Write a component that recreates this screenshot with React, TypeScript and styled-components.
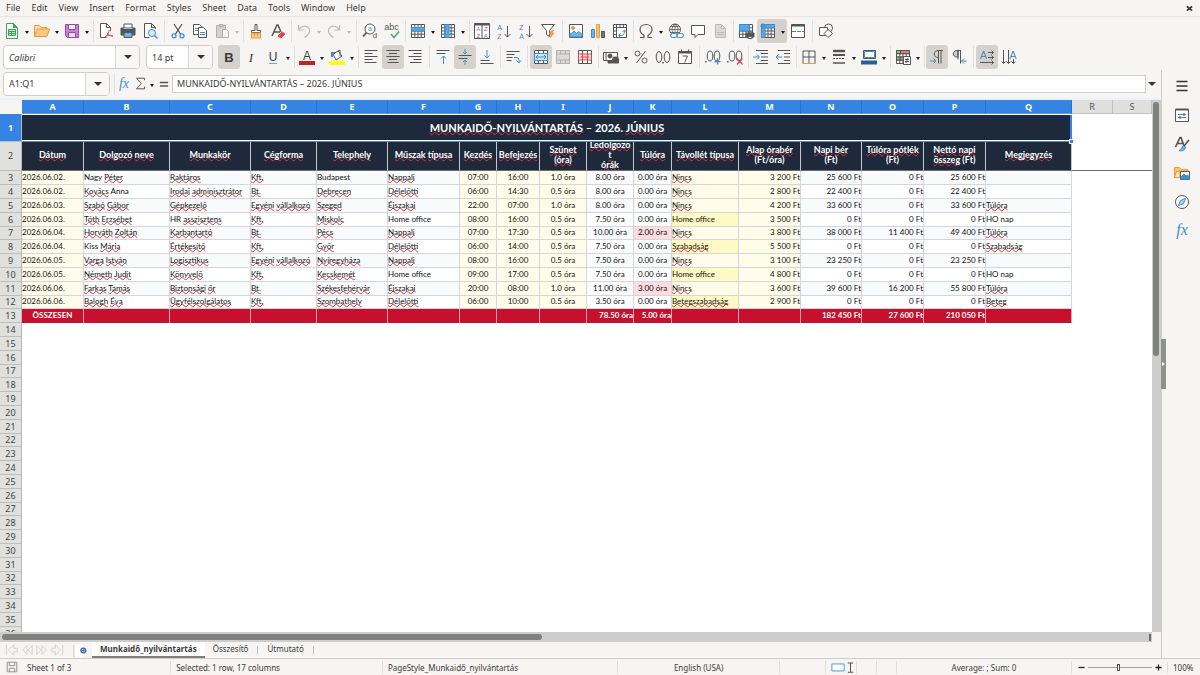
import React, { ReactNode } from 'react';
import styled, { createGlobalStyle, css } from 'styled-components';

const UI = '"Noto Sans", "Open Sans", sans-serif';
const CELL = 'Lato, "Liberation Sans", sans-serif';

const c = {
  chrome: '#f6f5f4',
  line: '#dad8d5',
  ink: '#3a3a38',
  blue: '#3584e4',
  navy: '#1e293b',
  red: '#c8102e',
  active: '#d5d1cd',
};

const GlobalStyle = createGlobalStyle`
  * { box-sizing: border-box; }
  html, body { margin: 0; }
  body { font-family: ${UI}; font-size: 9px; color: ${c.ink}; background: ${c.chrome}; overflow: hidden; }
  button, input { font: inherit; color: inherit; margin: 0; }
  svg { flex: none; overflow: visible; }
`;

const Shell = styled.div`
  display: flex;
  flex-direction: column;
  height: 100vh;
  background: ${c.chrome};
`;

const plainButton = css`
  border: 0;
  padding: 0;
  background: none;
`;

/* ---------- menu bar ---------- */
const MenuBar = styled.nav`
  display: flex;
  align-items: center;
  flex: none;
  height: 17px;
  padding: 0 7px 0 6px;
  gap: 11px;
  border-bottom: 1px solid #e6e4e2;
`;
const MenuItem = styled.button`
  ${plainButton}
  line-height: 16px;
`;
const CloseButton = styled.button`
  ${plainButton}
  margin-left: auto;
  display: flex;
`;

/* ---------- tool bars ---------- */
const Toolbar = styled.div`
  display: flex;
  align-items: center;
  flex: none;
  height: 27px;
  padding-left: 1px;
`;
const ToolButton = styled.button<{ $on?: boolean }>`
  ${plainButton}
  display: flex;
  align-items: center;
  justify-content: center;
  flex: none;
  width: 22px;
  height: 24px;
  border-radius: 3px;
  background: ${(p) => (p.$on ? c.active : 'transparent')};
`;
const ArrowButton = styled.button<{ $dim?: boolean }>`
  ${plainButton}
  display: flex;
  align-items: center;
  justify-content: center;
  flex: none;
  width: 8px;
  height: 24px;
  &::after {
    content: '';
    border: 2px solid transparent;
    border-top: 3px solid ${(p) => (p.$dim ? '#b9b7b4' : '#1c1c1c')};
    border-bottom: 0;
    margin-top: 3px;
  }
`;
const Split = styled.span<{ $on?: boolean }>`
  display: flex;
  border-radius: 3px;
  background: ${(p) => (p.$on ? c.active : 'transparent')};
`;
const Separator = styled.span<{ $tight?: boolean }>`
  flex: none;
  width: 1px;
  height: 22px;
  margin-left: ${(p) => (p.$tight ? 2 : 3)}px;
  margin-right: ${(p) => (p.$tight ? 1 : 2)}px;
  background: #e2dfdd;
`;

const Combo = styled.div<{ $width: number }>`
  display: flex;
  flex: none;
  width: ${(p) => p.$width}px;
  height: 24px;
  border: 1px solid #cfccc9;
  border-radius: 4px;
  background: #fff;
  overflow: hidden;
`;
const ComboInput = styled.input<{ $italic?: boolean }>`
  flex: 1;
  min-width: 0;
  border: 0;
  padding: 0 5px;
  outline: none;
  background: none;
  font-style: ${(p) => (p.$italic ? 'italic' : 'normal')};
`;
const ComboArrow = styled.button`
  ${plainButton}
  display: flex;
  align-items: center;
  justify-content: center;
  width: 24px;
  border-left: 1px solid #d8d5d2;
  background: #f8f7f6;
  &::after {
    content: '';
    border: 4px solid transparent;
    border-top-color: #2e3436;
    border-bottom: 0;
  }
`;
const FormatBar = styled(Toolbar)`
  height: 26px;
  padding-left: 3px;
`;
const ComboGroup = styled.div`
  display: flex;
  gap: 6px;
  margin-right: 5px;
`;

/* ---------- work area ---------- */
const Work = styled.main`
  display: flex;
  flex: 1;
  min-height: 0;
`;
const Document = styled.section`
  display: flex;
  flex-direction: column;
  flex: 1;
  min-width: 0;
`;
const FormulaBar = styled.div`
  display: flex;
  align-items: center;
  flex: none;
  height: 28px;
  padding: 0 0 1px 3px;
`;
const FormulaTools = styled.div`
  display: flex;
  align-items: center;
  padding-left: 2px;
`;
const SmallTool = styled.button`
  ${plainButton}
  display: flex;
  align-items: center;
  justify-content: center;
  width: 16px;
  height: 20px;
`;
const FormulaInput = styled.input`
  flex: 1;
  min-width: 0;
  height: 18px;
  padding: 0 4px;
  border: 1px solid #d0cdca;
  background: #fff;
  outline: none;
`;
const ExpandButton = styled.button`
  ${plainButton}
  display: flex;
  justify-content: center;
  width: 15px;
  padding-right: 3px;
  &::after {
    content: '';
    border: 4px solid transparent;
    border-top-color: #2e3436;
    border-bottom: 0;
  }
`;
const SheetArea = styled.div`
  display: flex;
  flex: 1;
  min-height: 0;
  border-top: 2px solid #eaf1f8;
`;
const GridView = styled.div`
  flex: 1;
  min-width: 0;
  overflow: hidden;
  background: #fff;
`;
const VTrack = styled.div`
  flex: none;
  width: 9px;
  padding: 2px 2px 0 1px;
  background: #cdcdcd;
`;
const VThumb = styled.div`
  height: 48%;
  border-radius: 3px;
  background: #80827f;
`;
const HTrack = styled.div`
  display: flex;
  align-items: center;
  flex: none;
  height: 10px;
  margin-right: 9px;
  padding: 0 1px 0 2px;
  background: #cdcdcd;
`;
const HThumb = styled.div`
  width: 47%;
  height: 6px;
  border-radius: 3px;
  background: #80827f;
`;
const HEnd = styled.div`
  width: 2px;
  height: 7px;
  margin-left: auto;
  background: #6b6d6a;
`;

/* ---------- spreadsheet table ---------- */
const Grid = styled.table`
  width: 100%;
  table-layout: fixed;
  border-collapse: separate;
  border-spacing: 0;
  font-family: ${CELL};
  font-size: 8px;
  line-height: 11px;
  color: #111;
  th, td { padding: 0; white-space: nowrap; }
`;
const GridRow = styled.tr<{ $height: number }>`
  height: ${(p) => p.$height}px;
`;
const Corner = styled.td`
  background: ${c.chrome};
`;
const ColHead = styled.th<{ $on?: boolean }>`
  height: 14px;
  font: ${(p) => (p.$on ? 'bold' : 'normal')} 9px/13px ${UI};
  color: ${(p) => (p.$on ? '#fff' : '#555')};
  background: ${(p) => (p.$on ? c.blue : '#dfdfde')};
  border-right: 1px solid ${(p) => (p.$on ? '#2c71c7' : '#c0c0bf')};
  border-bottom: 1px solid ${(p) => (p.$on ? '#5d9ae8' : '#c0c0bf')};
`;
const RowHead = styled.th<{ $on?: boolean }>`
  font: ${(p) => (p.$on ? 'bold' : 'normal')} 9px/12px ${UI};
  color: ${(p) => (p.$on ? '#fff' : '#444')};
  background: ${(p) => (p.$on ? c.blue : '#e0e0df')};
  border-right: 1px solid #b9b9b8;
  border-bottom: 1px solid #bdbdbc;
`;
const TitleCell = styled.td`
  && { padding-bottom: 3px; }
  position: relative;
  background: ${c.navy};
  color: #fff;
  font-size: 11px;
  font-weight: bold;
  text-align: center;
  border-top: 1px solid #fff;
  box-shadow: inset -2px 0 ${c.blue}, inset 0 -1px #4a90d9, inset 0 -2px #fff;
`;
const FillHandle = styled.span`
  position: absolute;
  right: -2px;
  bottom: -2px;
  width: 5px;
  height: 5px;
  background: ${c.blue};
  border: 1px solid #fff;
`;
const Frozen = styled.td`
  border-bottom: 1px solid #6b6b6b;
`;
const HeadCell = styled(Frozen)`
  background: ${c.navy};
  color: #fff;
  font-size: 9px;
  font-weight: bold;
  line-height: 10px;
  text-align: center;
  border-right: 1px solid #c3c9d0;
`;
const HeadText = styled.div`
  display: flex;
  flex-direction: column;
  justify-content: center;
  height: 28px;
  padding-bottom: 2px;
  overflow: hidden;
`;
type Align = 'left' | 'center' | 'right';
const Cell = styled.td<{ $align: Align; $bg: string }>`
  && { padding-bottom: 1px; }
  text-align: ${(p) => p.$align};
  background: ${(p) => p.$bg};
  border-right: 1px solid #d3d7dc;
  border-bottom: 1px solid #d3d7dc;
`;
const TotalCell = styled.td<{ $align: Align }>`
  && { padding-bottom: 2px; }
  text-align: ${(p) => p.$align};
  font-weight: bold;
  color: #fff;
  background: ${c.red};
  border-right: 1px solid #e0a3ad;
`;
const Misspelt = styled.span`
  text-decoration: underline wavy #e0363c 1px;
  text-decoration-skip-ink: none;
  text-underline-offset: -1px;
`;

/* ---------- tabs and status ---------- */
const TabBar = styled.div`
  display: flex;
  align-items: center;
  flex: none;
  height: 16px;
  padding-left: 5px;
  font-size: 8px;
`;
const TabNav = styled.button`
  ${plainButton}
  display: flex;
  width: 15px;
`;
const AddTab = styled.button`
  ${plainButton}
  display: flex;
  margin: 0 4px 0 8px;
`;
const Tab = styled.button<{ $on?: boolean }>`
  ${plainButton}
  align-self: stretch;
  padding: 0 8px;
  line-height: 14px;
  font-weight: ${(p) => (p.$on ? 'bold' : 'normal')};
  background: ${(p) => (p.$on ? '#fff' : 'none')};
  border-bottom: 2px solid ${(p) => (p.$on ? '#7d7f7c' : 'transparent')};
`;
const TabRule = styled.span`
  width: 1px;
  height: 8px;
  margin: 0 1px;
  background: #bdbbb8;
`;
const StatusBar = styled.footer`
  display: flex;
  align-items: center;
  flex: none;
  height: 17px;
  border-top: 1px solid #cfcdca;
  font-size: 8px;
`;
const Field = styled.div<{ $grow?: number; $width?: number; $center?: boolean }>`
  display: flex;
  align-items: center;
  justify-content: ${(p) => (p.$center ? 'center' : 'flex-start')};
  flex: ${(p) => (p.$grow ? `${p.$grow} 1 0` : 'none')};
  width: ${(p) => (p.$width ? `${p.$width}px` : 'auto')};
  min-width: 0;
  height: 13px;
  padding: 0 5px;
  gap: 8px;
  white-space: nowrap;
  border-right: 1px solid #e0dedc;
`;
const IconField = styled(Field)`
  padding: 0 0 0 5px;
  gap: 0;
`;
const ZoomField = styled.div`
  display: flex;
  align-items: center;
  flex: none;
  gap: 3px;
  width: 95px;
  padding: 0 5px 0 6px;
`;
const ZoomButton = styled.button`
  ${plainButton}
  display: flex;
`;
const ZoomSlider = styled.input`
  appearance: none;
  flex: 1;
  min-width: 0;
  height: 9px;
  background: linear-gradient(#a5a3a0, #a5a3a0) center / 100% 1px no-repeat;
  &::-webkit-slider-thumb {
    appearance: none;
    width: 3px;
    height: 7px;
    border: 1px solid #555;
    background: #f6f5f4;
  }
`;
const Percent = styled.span`
  flex: none;
  width: 33px;
  padding-left: 5px;
  border-left: 1px solid #e0dedc;
`;

/* ---------- side bar ---------- */
const Sidebar = styled.aside`
  position: relative;
  display: flex;
  flex-direction: column;
  align-items: center;
  flex: none;
  width: 39px;
  gap: 9px;
  padding: 6px 0 0 2px;
  border-left: 1px solid #cfcdca;
`;
const SideButton = styled.button`
  ${plainButton}
  display: flex;
  align-items: center;
  justify-content: center;
  width: 20px;
  height: 20px;
`;
const Splitter = styled.button`
  ${plainButton}
  position: absolute;
  left: -1px;
  top: 269px;
  width: 5px;
  height: 50px;
  background: #8f918e;
  &::after {
    content: '';
    display: block;
    margin-left: 1px;
    width: 0;
    border: 2px solid transparent;
    border-left: 3px solid #fff;
    border-right: 0;
  }
`;

/* ---------- icons ---------- */
const K = '#555';
const B = '#3a8fd0';
const O = '#ed9a3c';
const R = '#e2444a';
const P = '#a84fb8';

const Svg = ({ children, size = 16 }: { children: ReactNode; size?: number }) => (
  <svg width={size} height={size} viewBox="0 0 16 16" fill="none" stroke={K} aria-hidden="true">
    {children}
  </svg>
);
const gridLines = 'M1.5 1.5h13v13h-13zM1.5 4.8h13M1.5 8h13M1.5 11.2h13M4.8 1.5v13M8 1.5v13M11.2 1.5v13';
const glyph = { stroke: 'none', textAnchor: 'middle' as const };
const letter = { ...glyph, fontFamily: '"Liberation Sans", sans-serif' };

const icons: Record<string, ReactNode> = {
  new: (<><path d="M2.5 .5h7l4 4v11h-11z" fill="#fff" stroke="#3aa557" /><path d="M9.5.5v4h4z" fill="#3aa557" stroke="#3aa557" /><path d="M4.5 6.5h7v6h-7z" fill="#bfe5c8" stroke="#3aa557" /><path d="M4.5 8.5h7M4.5 10.5h7M7.5 8.5v4" stroke="#3aa557" /></>),
  open: (<><path d="M.5 13.5v-11h5l1.5 2h6v2" fill="#fbe3bb" stroke="#e39b3b" /><path d="M.5 13.5l2.5-7.5h12.5l-2.5 7.5z" fill="#fbc981" stroke="#e39b3b" /></>),
  save: (<><path d="M1.5 1.5h13v13h-11l-2-2z" fill="#c87fd4" stroke="#9c4bab" /><path d="M4.5 1.5h7v5h-7z" fill="#fff" stroke="#9c4bab" /><path d="M4.5 14.5v-5h7v5z" fill="#f1d9f5" stroke="#9c4bab" /></>),
  pdf: (<><path d="M12.5 8V4.5l-4-4h-6v14h6" fill="#fff" /><path d="M8.5.5v4h4" /><path d="M7 14c3-2 4-4 4-7M9 10c1 2 3 3 6 3M7 14c2-2 5-2 8-1" stroke={R} /></>),
  print: (<><path d="M4 5V1h8v4" fill="#fff" /><path d="M1 5h14v7H1z" fill="#555" /><path d="M3.5 5.5h9" stroke="#9bd" /><path d="M4 9.5h8v5H4z" fill="#6eb4e6" stroke={K} /></>),
  preview: (<><path d="M13.5 6V4.5l-4-4h-7v14h5" fill="#fff" /><path d="M9.5.5v4h4" /><circle cx="10" cy="10" r="3.5" fill="#d9edfa" stroke={B} /><path d="M12.5 12.5l3 3" stroke={B} strokeWidth="1.5" /></>),
  cut: (<><path d="M4 1l6.5 10M12 1L5.5 11" strokeWidth="1.3" /><circle cx="4" cy="12.8" r="2" stroke={B} strokeWidth="1.3" /><circle cx="12" cy="12.8" r="2" stroke={B} strokeWidth="1.3" /></>),
  copy: (<><path d="M1.5 1.5h6l2.5 2.5v7.500h-8.500z" fill="#fff" /><path d="M6.5 4.5h5l3 3v7h-8z" fill="#fff" /><path d="M3 5.5h3M3 7.5h3M8 9.5h5M8 11.5h5" stroke={B} /></>),
  paste: (<g stroke="#b3b1ae"><path d="M2.5 2.5h9v12h-9z" fill="#d3d1cf" /><path d="M5 1.5h4v2H5z" fill="#c3c1bf" /><path d="M8.5 6.5h4l2 2v6h-6z" fill="#f3f2f1" /></g>),
  clone: (<><path d="M7 1.5h2v6h3.5v2h-9v-2H7z" fill="#fff" /><path d="M3.5 10h9v5h-9z" fill="#f9c98a" stroke={O} /><path d="M6.5 10v3M9.5 10v3" stroke={O} /></>),
  clear: (<><path d="M2 13L7 2h1l3 7M4 9h6" strokeWidth="1.5" /><path d="M8 13l4-4 3 2-4 4z" fill={R} stroke={R} /></>),
  undo: (<path d="M2.5 2v5h5M2.500 7C5 2.500 11 2 13 5.500c1.500 3-.5 6.500-4.500 9" stroke="#bdbbb8" strokeWidth="1.2" />),
  redo: (<path d="M13.500 2v5h-5M13.500 7C11 2.500 5 2 3 5.500c-1.500 3 .5 6.500 4.500 9" stroke="#bdbbb8" strokeWidth="1.2" />),
  find: (<><circle cx="8" cy="6" r="5" fill="#fff" /><path d="M4.5 9.500L1 13.500" strokeWidth="1.8" /><text x="8" y="8" fontSize="7" fill={B} {...letter}>a</text><text x="13" y="15" fontSize="8" fill={K} {...letter}>d</text></>),
  spell: (<><text x="7.5" y="7" fontSize="9" fill={K} {...letter}>abc</text><path d="M7 11l3 3.500 5-6" stroke="#35b26b" strokeWidth="1.5" /></>),
  row: (<><path d={gridLines} fill="#fff" /><path d="M1.5 4.5h13v3.500h-13z" fill="#5aa9e6" stroke={B} /></>),
  col: (<><path d={gridLines} fill="#fff" /><path d="M5 1.5h4v13H5z" fill="#5aa9e6" stroke={B} /></>),
  sort: (<><path d="M.5.5h15v15H.5zM8 2v14" fill="#fff" /><path d="M.5 1.5h15" strokeWidth="2" /><text x="4.3" y="8" fontSize="6" fill={B} {...letter}>A</text><text x="4.3" y="15" fontSize="6" fill={P} {...letter}>Z</text><text x="11.8" y="8" fontSize="6" fill={P} {...letter}>Z</text><text x="11.8" y="15" fontSize="6" fill={B} {...letter}>A</text></>),
  asc: (<><text x="3.500" y="6.5" fontSize="7" fill={B} {...letter}>A</text><text x="3.500" y="15.500" fontSize="7" fill={P} {...letter}>Z</text><path d="M11.500 3v11M8.500 11l3 3 3-3" /></>),
  desc: (<><text x="3.500" y="6.5" fontSize="7" fill={P} {...letter}>Z</text><text x="3.500" y="15.500" fontSize="7" fill={B} {...letter}>A</text><path d="M11.500 3v11M8.500 11l3 3 3-3" /></>),
  filter: (<><path d="M1.5 1.5h13l-5 6v6l-3-2v-4z" fill="#fff" /><path d="M12 7l-3 4h2l-1 4 4.500-5h-2.500l2-3z" fill={O} stroke={O} strokeWidth=".5" /></>),
  image: (<><path d="M1.5 1.5h13v13h-13z" fill="#fff" /><path d="M2 14v-2.500L6 8l2.500 2.500L11 8.500l3 3V14z" fill="#6eb4e6" stroke={B} /><circle cx="5" cy="5" r="1.5" fill={O} stroke={O} /></>),
  chart: (<><path d="M1.5 6.5h3v8h-3z" fill="#6eb4e6" stroke={B} /><path d="M6.5 1.5h3v13h-3z" fill="#fbc36e" stroke={O} /><path d="M11.5 8.5h3v6h-3z" fill="#777" /></>),
  pivot: (<><path d="M1.5 1.5h13v13h-13z" fill="#fff" /><path d="M4.500 1.500v13M1.500 4.500h13M8 1.500v3M11.500 1.500v3M1.500 8h3M1.500 11.500h3" /><path d="M7 12.500h2.500c2 0 3-1.500 3-5M8.500 10.500l-2 2 2 2M10.500 9l2-2 2 2" stroke={B} /></>),
  omega: (<path d="M2 14.500h4v-2C3 10.500 2 9 2 6.500 2 3.500 4.500 1.500 8 1.500s6 2 6 5c0 2.500-1 4-4 6v2h4" strokeWidth="1.2" />),
  link: (<><circle cx="7" cy="6.5" r="5.500" fill="#fff" /><path d="M1.5 6.5h11M7 1v11M2.500 3.500h9M2.500 9.500h9M7 1C3 4 3 9 7 12M7 1c4 3 4 8 0 11" strokeWidth=".8" /><rect x="2.5" y="10.5" width="7" height="4" rx="2" fill="#f6f5f4" stroke={B} /><rect x="8.5" y="10.5" width="7" height="4" rx="2" stroke={B} /></>),
  comment: (<path d="M1.5 2.5h13v9H8l-3 3v-3H1.5z" fill="#fff" />),
  header: (<><path d="M3.5 1.5h6l4 4v9h-10z" fill="#dcdad8" stroke="#bcbab7" /><path d="M5 9.500h7M5 11.500h7M9.500 1.500v4h4" stroke="#bcbab7" /></>),
  printArea: (<><path d={gridLines} fill="#fff" /><path d="M1.5 1.5h9.700v6.500H1.5z" fill="#5aa9e6" stroke={B} /><path d="M8 10h8v4H8z" fill="#555" /><path d="M10 9h4M10 13.500h4v2h-4z" fill="#fff" /></>),
  freeze: (<><path d={gridLines} fill="#fff" /><path d="M1.5 1.5h13v3.300H5v9.700H1.500z" fill="#5aa9e6" stroke={B} /><path d="M3 0v6M0 3h6" stroke={B} /></>),
  splitWin: (<><path d="M1.5 1.5h13v13h-13z" fill="#fff" /><path d="M1.5 2.5h13" strokeWidth="2" /><path d="M2 8.500h12" stroke={B} strokeDasharray="4 1" /></>),
  shapes: (<><circle cx="10.5" cy="5" r="4" fill="#fff" /><path d="M1.5 4.500h8v8h-8z" fill="#fff" /><path d="M10 6.500l4.500 4-4.500 4-4-4z" fill="#fff" /></>),
  bold: (<text x="8" y="13" fontSize="13" fontWeight="bold" fill="#3a3a3a" {...letter}>B</text>),
  italic: (<text x="8" y="13" fontSize="13" fontStyle="italic" fill="#3a3a3a" fontFamily="Liberation Serif, serif" {...glyph}>I</text>),
  underline: (<><text x="8" y="12" fontSize="12" fill="#3a3a3a" {...letter}>U</text><path d="M4 14.500h8" stroke="#5aa9e6" /></>),
  fontColor: (<><text x="8" y="10.5" fontSize="12" fill="#3a3a3a" {...letter}>A</text><path d="M0 14h16" stroke="#c9211e" strokeWidth="4" /></>),
  fill: (<><path d="M4 5l5-3 4 5-6 4z" fill="#fff" /><path d="M9 2l2-1v6" /><path d="M3 8V4h3" stroke={B} strokeWidth="2" /><path d="M0 14h16" stroke="#ff0" strokeWidth="4" /></>),
  left: (<path d="M1.5 1.5h13M1.5 4.500h8M1.500 7.500h13M1.500 10.500h8M1.500 13.500h12" />),
  center: (<path d="M1.5 1.5h13M4 4.500h8M1.500 7.500h13M4 10.500h8M2.500 13.500h11" />),
  right: (<path d="M1.5 1.5h13M6.500 4.500h8M1.500 7.500h13M6.500 10.500h8M3 13.500h11.500" />),
  top: (<><path d="M1.5 1.5h13M1.5 4.500h9" /><path d="M8.500 15V7M6 9.500L8.500 7 11 9.500" stroke={B} /></>),
  middle: (<><path d="M1.5 6.5h13M1.5 9.500h9" /><path d="M8 0v5M6 3l2 2 2-2M8 16v-5M6 13l2-2 2 2" stroke={B} /></>),
  bottom: (<><path d="M1.5 14.500h13M1.500 11.500h9" /><path d="M8 1v8M5.500 6.500L8 9l2.500-2.500" stroke={B} /></>),
  wrap: (<><path d="M1.5 2.5h13M1.5 5.500h8M1.500 8.500h6M1.500 11.500h5" /><path d="M9 8.500h3c2 .5 2 2 2 5M11.500 11.500l2.500 2.500 2-2.500" stroke={B} /></>),
  merge: (<><path d="M1.5 1.5h13v13h-13zM5.500 1.500v3M10.500 1.500v3M5.500 11.500v3M10.500 11.500v3" fill="#fff" /><path d="M1.5 4.500h13v7h-13z" fill="#cfe6f7" stroke={B} /><path d="M3 8h10M5 6L3 8l2 2M11 6l2 2-2 2" stroke={B} /></>),
  mergeOff: (<path d="M1.5 1.5h13v13h-13zM1.5 5h13M1.500 11h13M5.500 1.500V5M10.500 1.500V5M5.500 11v3.500M10.500 11v3.500" fill="#dcdad8" stroke="#b5b3b0" />),
  unmerge: (<><path d="M1.5 1.5h13v13h-13zM5.500 1.500v13M10.500 1.500v13" fill="#fff" /><path d="M1.500 5h13v6h-13zM5.500 5v6M10.500 5v6M3.500 8h9" fill="#fbdcdc" stroke={R} /></>),
  currency: (<><path d="M.5 3.500h14v8H.5z" fill="#fff" /><circle cx="7" cy="7" r="2" fill="#555" /><path d="M3 3.500v8" /><ellipse cx="12.500" cy="9" rx="3" ry="1" fill="#555" /><path d="M9.500 10h6v4h-6zM5 12h4v2H5z" fill="#555" /></>),
  percent: (<><circle cx="4.5" cy="4.5" r="2.5" /><circle cx="11.5" cy="11.5" r="2.5" /><path d="M12.5 2l-9 12" /></>),
  number: (<><ellipse cx="4" cy="8" rx="2.8" ry="5.5" /><path d="M8 13v1.500" strokeWidth="1.5" /><ellipse cx="12" cy="8" rx="2.8" ry="5.5" /></>),
  date: (<><path d="M1.5 2.5h13v12h-13z" fill="#fff" /><path d="M1.5 3.500h13" strokeWidth="2" /><path d="M4.500.5v3M11.500.5v3M5.500 7h5l-3 6.500" /></>),
  addDec: (<><path d="M.8 12v1.500" strokeWidth="1.5" /><ellipse cx="5" cy="7" rx="2.8" ry="5" /><ellipse cx="12" cy="7" rx="2.8" ry="5" /><path d="M12.500 9v6.500M9.500 12.500h6" stroke={B} strokeWidth="1.3" /></>),
  delDec: (<><path d="M.8 12v1.500" strokeWidth="1.5" /><ellipse cx="5" cy="7" rx="2.8" ry="5" /><ellipse cx="12" cy="7" rx="2.8" ry="5" /><path d="M10 9.500l5.500 6M15.500 9.500l-5.500 6" stroke={R} strokeWidth="1.3" /></>),
  indent: (<><path d="M3 1.500h12M8 4.500h7M8 8h7M8 11.500h7M3 14.500h12" /><path d="M0 8h6M4 5.500L6.500 8 4 10.500" stroke={B} /></>),
  outdent: (<><path d="M3 1.500h12M9 4.500h6M9 8h6M9 11.500h6M3 14.500h12" /><path d="M7 8H1M3.500 5.500L1 8l2.500 2.500" stroke={B} /></>),
  borders: (<><path d="M2 2v12.500M14 2v12.500M2 2h12M8 2v12M2 8h12" /><path d="M1.500 14.500h13" stroke={O} /></>),
  lineStyle: (<><path d="M2 2h12" strokeWidth="2.5" /><path d="M2 6h12" strokeWidth="2" /><path d="M2 9.500h12" strokeDasharray="2 1" /><path d="M2 14h12" strokeWidth="1.5" /></>),
  lineColor: (<><path d="M2.500 1.500h12v8h-12z" fill="#fff" /><path d="M3.500 2.500h10v6h-10z" stroke={B} /><path d="M0 13.500h16" stroke="#2a6099" strokeWidth="4" /></>),
  cond: (<><path d={gridLines} fill="#fff" /><path d="M1.500 1.500h4v3h-4zM1.500 8h4v3h-4z" fill="#7c7" /><path d="M5.500 1.500h9v3h-9zM5 8h4v3H5z" fill="#e77" /><path d="M8.500 7.500h7v8h-7z" fill="#fff" /><path d="M10 10.500h4M10 12.500h4M13 9l-2 5" /></>),
  ltr: (<><path d="M9 8.500C4 8.500 4 1.500 9 1.500h5M9.500 1.500v13M12 1.500v13" /><path d="M1 12h6M4.500 9.500L7 12l-2.500 2.500" stroke={B} /></>),
  rtl: (<><path d="M6 8C1 8 1 1.500 6 1.500h1V8z" fill="#ccc" /><path d="M6 1.500h4M7 1.500v9M9.500 1.500v13" /><path d="M15.500 12h-5M13 9.500L10.500 12l2.500 2.500" stroke={B} /></>),
  textH: (<><text x="4.5" y="10" fontSize="11" fill={B} {...letter}>A</text><path d="M9 3.500h5.500M9 8.500h5.500M1 13.500h13.500M12.500 1.500l2 2-2 2M12.500 6.500l2 2-2 2M12.500 11.500l2 2-2 2" /></>),
  textV: (<><path d="M2.500 1v13.500M7.500 1v13.500M12.500 10v4.500M.5 12.500l2 2 2-2M5.500 12.500l2 2 2-2M10.500 12.500l2 2 2-2" /><text x="12" y="10" fontSize="11" fill={B} {...letter}>A</text></>),
  fx: (<text x="8" y="12" fontSize="16" fontStyle="italic" fontFamily="Liberation Serif, serif" fill={B} {...glyph}>fx</text>),
  sum: (<path d="M13 4V1.500H3L9 8l-6 6.500h10V12" strokeWidth="1.2" />),
  equals: (<path d="M2.500 6h11M2.500 10.500h11" strokeWidth="2" />),
  menu: (<path d="M2.500 3.500h11M2.500 8h11M2.500 12.500h11" stroke="#333" strokeWidth="1.5" />),
  props: (<><path d="M1.500 2.500h13v12h-13z" fill="#fff" /><path d="M1.500 2.500h13" strokeWidth="2" /><path d="M4 7.500h8M4 10.500h8" stroke={B} /><path d="M10 6v3M6 9v3" stroke={K} /></>),
  styles: (<><path d="M1.500 11L6 1.500h1L10 10M3 7.500h5.500" strokeWidth="1.700" /><path d="M15 4l-5 6" strokeWidth="1.700" /><path d="M5 14.500c3 1 6 0 6.500-3.500l-2-1c-2 0-1.500 3.500-4.500 4.500z" fill="#6eb4e6" stroke={B} /></>),
  gallery: (<><path d="M.5 12.500v-10h5l1.500 2h7v2" fill="#fbc36e" stroke={O} /><path d="M.5 12.500l2-6H6v6z" fill="#fbe3bb" stroke={O} /><path d="M6.500 6.500h9v8h-9z" fill="#fff" /><path d="M7 14v-2l3-3 2 2 1.500-1 1.500 1.500V14z" fill={B} stroke={B} /></>),
  navigator: (<><circle cx="8" cy="8" r="6.5" fill="#fff" /><path d="M11.500 4.500l-2 5-5 2 2-5z" fill="#a8d3f2" stroke={B} /></>),
  disk: (<g stroke="#8a8886"><path d="M2.500 2.500h11v11h-11zM5 2.500v4h6v-4M5 13.500v-4h6v4" /></g>),
  first: (<path d="M1.500 2v12M10 2L4 8l6 6v-4h4V6h-4z" stroke="#cfcdca" />),
  prev: (<path d="M8 3L3 8l5 5zM14 3L9 8l5 5z" stroke="#cfcdca" />),
  next: (<path d="M2 3l5 5-5 5zM8 3l5 5-5 5z" stroke="#cfcdca" />),
  last: (<path d="M14.500 2v12M6 2l6 6-6 6v-4H2V6h4z" stroke="#cfcdca" />),
  sheetAdd: (<><path d="M1 2h9v13H1z" fill="#fff" stroke="none" /><path d="M1 2v13" stroke="#c8c6c3" /><circle cx="11" cy="8" r="2.500" fill="#fff" stroke="#3465a4" strokeWidth="1.500" /><path d="M11 6.500v3M9.500 8h3" stroke="#3465a4" /></>),
  close: (<path d="M2 3l12 10M14 3L2 13" stroke="#2e3436" strokeWidth="4" />),
  minus: (<path d="M1 8h14" stroke="#222" strokeWidth="3" />),
  plus: (<path d="M1 8h14M8 1v14" stroke="#222" strokeWidth="3" />),
  selection: (<path d="M1 4.500h14v8H1z" fill="#fff" stroke={B} />),
  beam: (<path d="M4 1.500h8M8 1.500v14M4 15h8" strokeWidth="1.500" />),
};

const Icon = ({ name, size }: { name: string; size?: number }) => <Svg size={size}>{icons[name]}</Svg>;

/* ---------- tool bar description ---------- */
type Tool = { icon: string; label: string; menu?: boolean; on?: boolean; dim?: boolean } | 'sep' | 'tight';
const t = (icon: string, label: string, o: { menu?: boolean; on?: boolean; dim?: boolean } = {}): Tool => ({ icon, label, ...o });

const standardTools: Tool[] = [
  t('new', 'New', { menu: true }), t('open', 'Open', { menu: true }), t('save', 'Save', { menu: true }), 'tight',
  t('pdf', 'Export as PDF'), t('print', 'Print'), t('preview', 'Print Preview'), 'sep',
  t('cut', 'Cut'), t('copy', 'Copy'), t('paste', 'Paste', { menu: true, dim: true }), 'tight',
  t('clone', 'Clone Formatting'), t('clear', 'Clear Formatting'), 'tight',
  t('undo', 'Undo', { menu: true, dim: true }), t('redo', 'Redo', { menu: true, dim: true }), 'sep',
  t('find', 'Find and Replace'), t('spell', 'Spelling'), 'tight',
  t('row', 'Row', { menu: true }), t('col', 'Column', { menu: true }), 'tight',
  t('sort', 'Sort'), t('asc', 'Sort Ascending'), t('desc', 'Sort Descending'), t('filter', 'AutoFilter'), 'sep',
  t('image', 'Insert Image'), t('chart', 'Insert Chart'), t('pivot', 'Insert Pivot Table'), 'tight',
  t('omega', 'Special Character', { menu: true }), t('link', 'Insert Hyperlink'), t('comment', 'Insert Comment'), t('header', 'Headers and Footers'), 'tight',
  t('printArea', 'Define Print Area'), t('freeze', 'Freeze Rows and Columns', { menu: true, on: true }), t('splitWin', 'Split Window'), 'sep',
  t('shapes', 'Show Draw Functions'),
];

const formatTools: Tool[] = [
  t('bold', 'Bold', { on: true }), t('italic', 'Italic'), t('underline', 'Underline', { menu: true }), 'tight',
  t('fontColor', 'Font Color', { menu: true }), t('fill', 'Background Color', { menu: true }), 'tight',
  t('left', 'Align Left'), t('center', 'Center Horizontally', { on: true }), t('right', 'Align Right'), 'sep',
  t('top', 'Align Top'), t('middle', 'Center Vertically', { on: true }), t('bottom', 'Align Bottom'), 'tight',
  t('wrap', 'Wrap Text'), 'sep',
  t('merge', 'Merge and Center', { on: true }), t('mergeOff', 'Merge Cells'), t('unmerge', 'Unmerge Cells'), 'tight',
  t('currency', 'Format as Currency', { menu: true }), t('percent', 'Format as Percent'), t('number', 'Format as Number'), t('date', 'Format as Date'), 'sep',
  t('addDec', 'Add Decimal Place'), t('delDec', 'Delete Decimal Place'), 'tight',
  t('indent', 'Increase Indent'), t('outdent', 'Decrease Indent'), 'tight',
  t('borders', 'Borders', { menu: true }), t('lineStyle', 'Border Style', { menu: true }), t('lineColor', 'Border Color', { menu: true }), 'tight',
  t('cond', 'Conditional Formatting', { menu: true }), 'tight',
  t('ltr', 'Left-To-Right', { on: true }), t('rtl', 'Right-To-Left'), 'sep',
  t('textH', 'Text direction from left to right', { on: true }), t('textV', 'Text direction from top to bottom'),
];

const Tools = ({ items }: { items: Tool[] }) => (
  <>
    {items.map((item, i) => {
      if (item === 'sep' || item === 'tight') return <Separator key={i} $tight={item === 'tight'} />;
      if (!item.menu) {
        return (
          <ToolButton key={i} $on={item.on} aria-label={item.label}>
            <Icon name={item.icon} />
          </ToolButton>
        );
      }
      return (
        <Split key={i} $on={item.on}>
          <ToolButton aria-label={item.label}><Icon name={item.icon} /></ToolButton>
          <ArrowButton aria-label={`${item.label} options`} $dim={item.dim} />
        </Split>
      );
    })}
  </>
);

/* ---------- sheet data; a leading ~ marks a word the spell checker flags ---------- */
const Words = ({ text }: { text: string }) => (
  <>
    {text.split(' ').map((word, i) => (
      <React.Fragment key={i}>
        {i > 0 && ' '}
        {word.startsWith('~') ? <Misspelt>{word.slice(1)}</Misspelt> : word}
      </React.Fragment>
    ))}
  </>
);

const columns: { width: number; align: Align; head: string[]; total?: string }[] = [
  { width: 62, align: 'left', head: ['~Dátum'], total: 'ÖSSZESEN' },
  { width: 86, align: 'left', head: ['~Dolgozó ~neve'] },
  { width: 81, align: 'left', head: ['~Munkakör'] },
  { width: 66, align: 'left', head: ['~Cégforma'] },
  { width: 71, align: 'left', head: ['~Telephely'] },
  { width: 72, align: 'left', head: ['~Műszak ~típusa'] },
  { width: 37, align: 'center', head: ['~Kezdés'] },
  { width: 43, align: 'center', head: ['~Befejezés'] },
  { width: 47, align: 'center', head: ['~Szünet', '~(óra)'] },
  { width: 47, align: 'center', head: ['~Ledolgozo', '~t', '~órák'], total: '78.50 óra' },
  { width: 38, align: 'center', head: ['~Túlóra'], total: '5.00 óra' },
  { width: 67, align: 'left', head: ['~Távollét ~típusa'] },
  { width: 62, align: 'right', head: ['~Alap ~órabér', '(Ft/óra)'] },
  { width: 61, align: 'right', head: ['~Napi ~bér', '(Ft)'], total: '182 450 Ft' },
  { width: 62, align: 'right', head: ['~Túlóra ~pótlék', '(Ft)'], total: '27 600 Ft' },
  { width: 62, align: 'right', head: ['~Nettó ~napi', '~összeg (Ft)'], total: '210 050 Ft' },
  { width: 86, align: 'left', head: ['~Megjegyzés'] },
];

const rows = `2026.06.02.|Nagy ~Péter|~Raktáros|~Kft.|Budapest|~Nappali|07:00|16:00|1.0 óra|8.00 óra|0.00 óra|~Nincs|3 200 Ft|25 600 Ft|0 Ft|25 600 Ft|
2026.06.02.|~Kovács Anna|~Irodai ~adminisztrátor|~Bt.|~Debrecen|~Délelőtti|06:00|14:30|0.5 óra|8.00 óra|0.00 óra|~Nincs|2 800 Ft|22 400 Ft|0 Ft|22 400 Ft|
2026.06.03.|~Szabó ~Gábor|~Gépkezelő|~Egyéni ~vállalkozó|~Szeged|~Éjszakai|22:00|07:00|1.0 óra|8.00 óra|0.00 óra|~Nincs|4 200 Ft|33 600 Ft|0 Ft|33 600 Ft|~Túlóra
2026.06.03.|~Tóth ~Erzsébet|HR ~asszisztens|~Kft.|~Miskolc|Home office|08:00|16:00|0.5 óra|7.50 óra|0.00 óra|Home office|3 500 Ft|0 Ft|0 Ft|0 Ft|HO nap
2026.06.04.|~Horváth ~Zoltán|~Karbantartó|~Bt.|~Pécs|~Nappali|07:00|17:30|0.5 óra|10.00 óra|2.00 óra|~Nincs|3 800 Ft|38 000 Ft|11 400 Ft|49 400 Ft|~Túlóra
2026.06.04.|Kiss ~Mária|~Értékesítő|~Kft.|~Győr|~Délelőtti|06:00|14:00|0.5 óra|7.50 óra|0.00 óra|~Szabadság|5 500 Ft|0 Ft|0 Ft|0 Ft|~Szabadság
2026.06.05.|~Varga ~István|~Logisztikus|~Egyéni ~vállalkozó|~Nyíregyháza|~Nappali|08:00|16:00|0.5 óra|7.50 óra|0.00 óra|~Nincs|3 100 Ft|23 250 Ft|0 Ft|23 250 Ft|
2026.06.05.|~Németh ~Judit|~Könyvelő|~Kft.|~Kecskemét|Home office|09:00|17:00|0.5 óra|7.50 óra|0.00 óra|Home office|4 800 Ft|0 Ft|0 Ft|0 Ft|HO nap
2026.06.06.|~Farkas ~Tamás|~Biztonsági ~őr|~Bt.|~Székesfehérvár|~Éjszakai|20:00|08:00|1.0 óra|11.00 óra|3.00 óra|~Nincs|3 600 Ft|39 600 Ft|16 200 Ft|55 800 Ft|~Túlóra
2026.06.06.|~Balogh ~Éva|~Ügyfélszolgálatos|~Kft.|~Szombathely|~Délelőtti|06:00|10:00|0.5 óra|3.50 óra|0.00 óra|~Betegszabadság|2 900 Ft|0 Ft|0 Ft|0 Ft|~Beteg`
  .split('\n')
  .map((line) => line.split('|'));

const inputColumns = new Set([0, 6, 7, 8, 11, 12]);
const cellColour = (row: number, col: number, value: string) => {
  if (col === 10 && value !== '0.00 óra') return '#fddcdf';
  if (col === 11 && value !== '~Nincs') return '#fff9c4';
  if (inputColumns.has(col)) return '#fffde9';
  return row % 2 === 0 ? '#f8fafc' : '#ffffff';
};

/* four 14px rows and one 13px row make up the standard row height */
const rowHeight = (n: number) => (n % 5 === 2 ? 13 : 14);
const letters = 'ABCDEFGHIJKLMNOPQ'.split('');
const emptyRows = Array.from({ length: 23 }, (_, i) => i + 14);

const Spreadsheet = () => (
  <Grid>
    <colgroup>
      <col width={22} />
      {columns.map((col, i) => <col key={i} width={col.width} />)}
      <col width={41} />
      <col />
    </colgroup>
    <thead>
      <GridRow $height={14}>
        <Corner />
        {letters.map((l) => <ColHead key={l} scope="col" $on>{l}</ColHead>)}
        <ColHead scope="col">R</ColHead>
        <ColHead scope="col">S</ColHead>
      </GridRow>
    </thead>
    <tbody>
      <GridRow $height={28}>
        <RowHead scope="row" $on>1</RowHead>
        <TitleCell colSpan={17}>
          <Words text="~MUNKAIDŐ-NYILVÁNTARTÁS – 2026. ~JÚNIUS" />
          <FillHandle />
        </TitleCell>
        <td colSpan={2} />
      </GridRow>
      <GridRow $height={29}>
        <RowHead scope="row">2</RowHead>
        {columns.map((col, i) => (
          <HeadCell key={i}>
            <HeadText>
              {col.head.map((line) => <div key={line}><Words text={line} /></div>)}
            </HeadText>
          </HeadCell>
        ))}
        <Frozen colSpan={2} />
      </GridRow>
      {rows.map((row, r) => (
        <GridRow key={r} $height={rowHeight(r + 3)}>
          <RowHead scope="row">{r + 3}</RowHead>
          {row.map((value, i) => (
            <Cell key={i} $align={columns[i].align} $bg={cellColour(r, i, value)}>
              <Words text={value} />
            </Cell>
          ))}
          <td colSpan={2} />
        </GridRow>
      ))}
      <GridRow $height={14}>
        <RowHead scope="row">13</RowHead>
        {columns.map((col, i) => (
          <TotalCell key={i} $align={i === 0 ? 'center' : 'right'}>{col.total}</TotalCell>
        ))}
        <td colSpan={2} />
      </GridRow>
      {emptyRows.map((n) => (
        <GridRow key={n} $height={rowHeight(n)}>
          <RowHead scope="row">{n}</RowHead>
          <td colSpan={19} />
        </GridRow>
      ))}
    </tbody>
  </Grid>
);

const menus = ['File', 'Edit', 'View', 'Insert', 'Format', 'Styles', 'Sheet', 'Data', 'Tools', 'Window', 'Help'];
const decks = [['menu', 'Sidebar Settings'], ['props', 'Properties'], ['styles', 'Styles'], ['gallery', 'Gallery'], ['navigator', 'Navigator'], ['fx', 'Functions']];

export default function App() {
  return (
    <Shell>
      <GlobalStyle />
      <MenuBar>
        {menus.map((m) => <MenuItem key={m}>{m}</MenuItem>)}
        <CloseButton aria-label="Close document"><Icon name="close" size={7} /></CloseButton>
      </MenuBar>
      <Toolbar><Tools items={standardTools} /></Toolbar>
      <FormatBar>
        <ComboGroup>
          <Combo $width={137}>
            <ComboInput $italic aria-label="Font name" defaultValue="Calibri" />
            <ComboArrow aria-label="Font list" />
          </Combo>
          <Combo $width={67}>
            <ComboInput aria-label="Font size" defaultValue="14 pt" />
            <ComboArrow aria-label="Font size list" />
          </Combo>
        </ComboGroup>
        <Tools items={formatTools} />
      </FormatBar>
      <Work>
        <Document>
          <FormulaBar>
            <Combo $width={107}>
              <ComboInput aria-label="Name box" defaultValue="A1:Q1" />
              <ComboArrow aria-label="Named ranges" />
            </Combo>
            <FormulaTools>
              <Separator $tight />
              <SmallTool aria-label="Function Wizard"><Icon name="fx" size={14} /></SmallTool>
              <SmallTool aria-label="Select Function"><Icon name="sum" size={13} /></SmallTool>
              <ArrowButton aria-label="Select Function options" />
              <SmallTool aria-label="Formula"><Icon name="equals" size={12} /></SmallTool>
            </FormulaTools>
            <FormulaInput aria-label="Input line" defaultValue="MUNKAIDŐ-NYILVÁNTARTÁS – 2026. JÚNIUS" spellCheck={false} />
            <ExpandButton aria-label="Expand formula bar" />
          </FormulaBar>
          <SheetArea>
            <GridView><Spreadsheet /></GridView>
            <VTrack><VThumb /></VTrack>
          </SheetArea>
          <HTrack><HThumb /><HEnd /></HTrack>
          <TabBar>
            {['first', 'prev', 'next', 'last'].map((n) => (
              <TabNav key={n} aria-label={`${n} sheet`}><Icon name={n} size={14} /></TabNav>
            ))}
            <AddTab aria-label="Add sheet"><Icon name="sheetAdd" size={15} /></AddTab>
            <Tab $on>Munkaidő_nyilvántartás</Tab>
            <Tab>Összesítő</Tab>
            <TabRule />
            <Tab>Útmutató</Tab>
            <TabRule />
          </TabBar>
        </Document>
        <Sidebar>
          {decks.map(([icon, label]) => (
            <SideButton key={icon} aria-label={label}><Icon name={icon} /></SideButton>
          ))}
          <Splitter aria-label="Hide sidebar" />
        </Sidebar>
      </Work>
      <StatusBar>
        <Field $grow={170}><Icon name="disk" size={14} />Sheet 1 of 3</Field>
        <Field $grow={213}>Selected: 1 row, 17 columns</Field>
        <Field $grow={238}>PageStyle_Munkaidő_nyilvántartás</Field>
        <Field $grow={160} $center>English (USA)</Field>
        <Field $width={46} />
        <IconField $width={31}><Icon name="selection" size={14} /><Icon name="beam" size={11} /></IconField>
        <Field $width={20} />
        <Field $width={20} />
        <Field $grow={174} $center>Average: ; Sum: 0</Field>
        <ZoomField>
          <ZoomButton aria-label="Zoom out"><Icon name="minus" size={7} /></ZoomButton>
          <ZoomSlider type="range" aria-label="Zoom" min={0} max={100} defaultValue={48} />
          <ZoomButton aria-label="Zoom in"><Icon name="plus" size={7} /></ZoomButton>
        </ZoomField>
        <Percent>100%</Percent>
      </StatusBar>
    </Shell>
  );
}
